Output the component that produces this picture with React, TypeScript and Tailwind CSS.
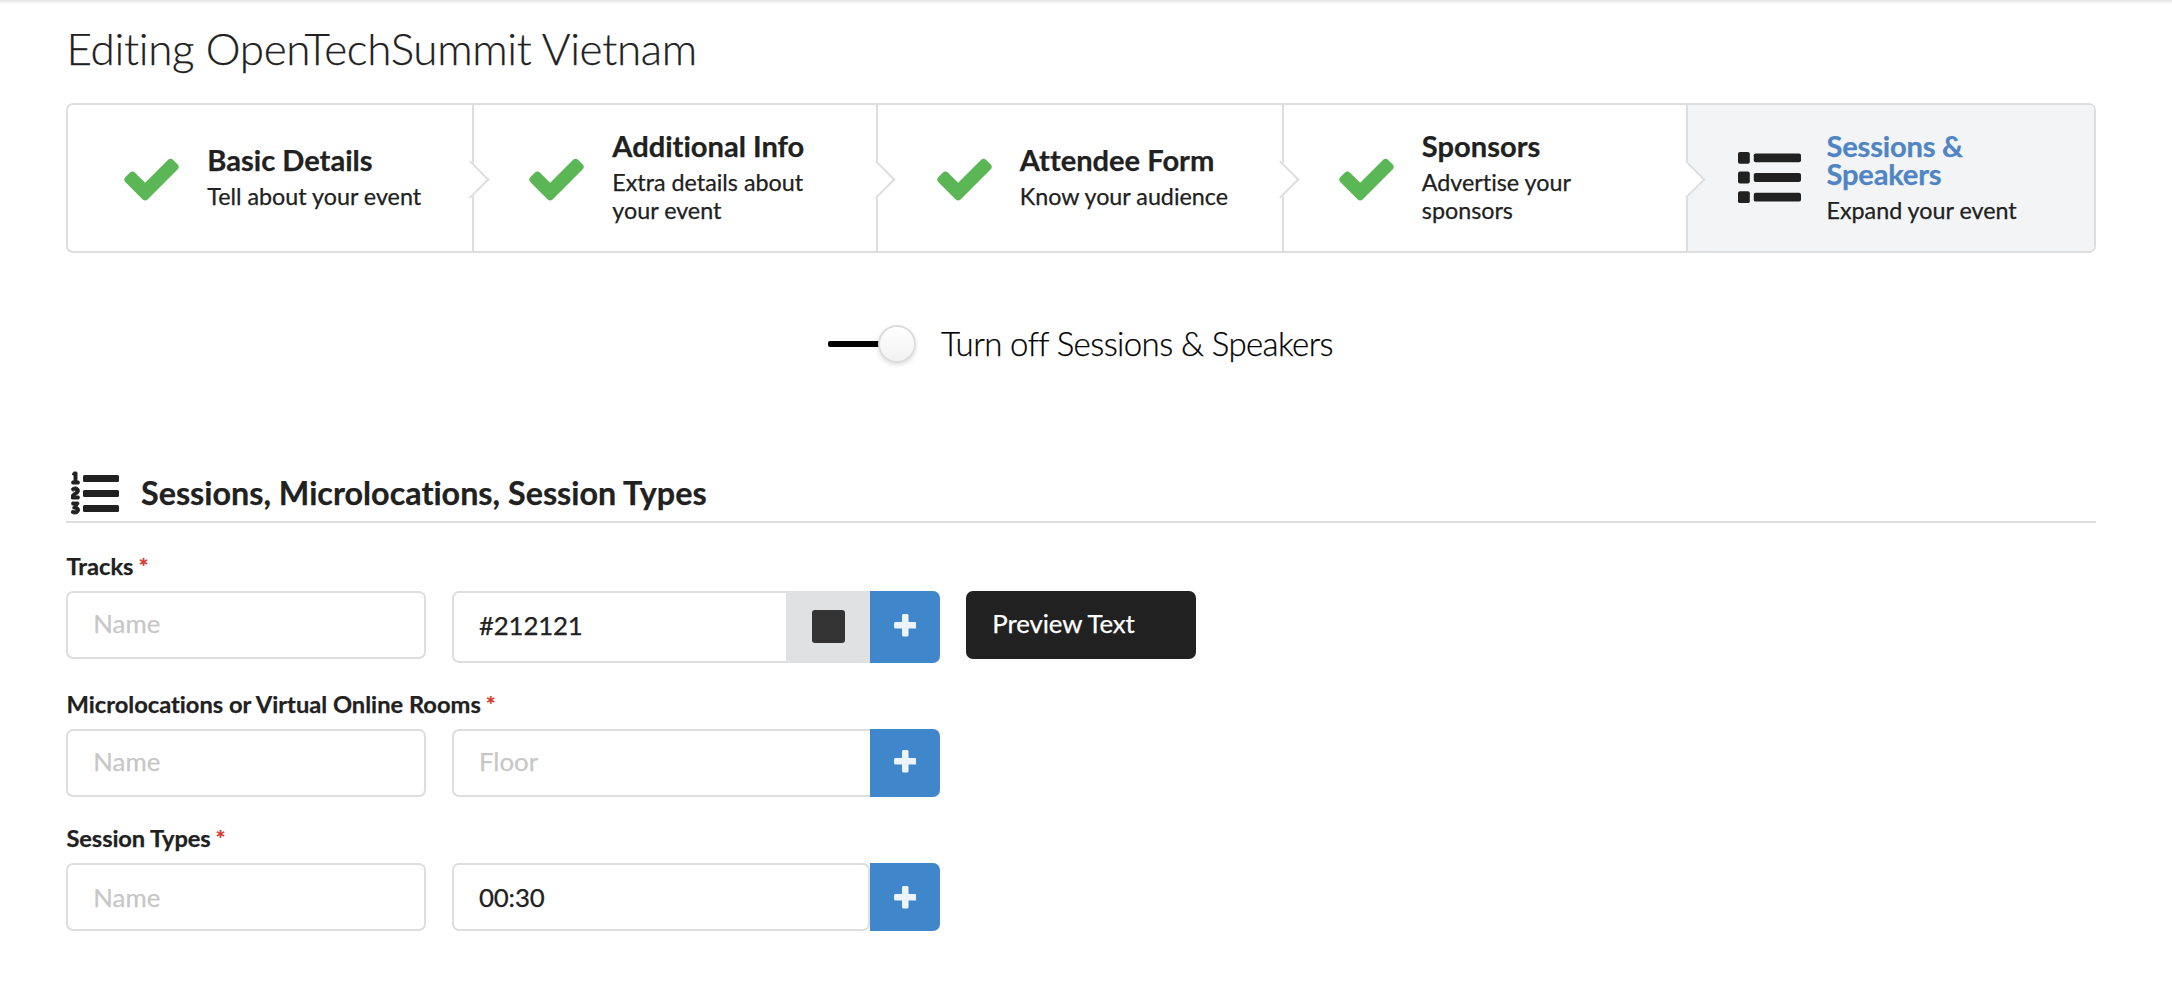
import type { ReactNode } from "react";
import { FaListOl } from "react-icons/fa";

function CheckIcon() {
  return (
    <svg viewBox="0 0 1792 1792" className="size-[63px] shrink-0 fill-[#5bb756]">
      <path d="M1671 566q0 40-28 68l-724 724-136 136q-28 28-68 28t-68-28l-136-136-362-362q-28-28-28-68t28-68l136-136q28-28 68-28t68 28l294 295 656-657q28-28 68-28t68 28l136 136q28 28 28 68z" />
    </svg>
  );
}

function ListIcon() {
  return (
    <svg viewBox="0 0 512 512" className="size-[63px] shrink-0 fill-[#212121]">
      {[96, 256, 416].map((y) => (
        <g key={y}>
          <rect x="0" y={y - 48} width="96" height="96" rx="16" />
          <rect x="128" y={y - 36} width="384" height="72" rx="16" />
        </g>
      ))}
    </svg>
  );
}

function OrderedListIcon() {
  return (
    <div className="flex h-12 w-12 shrink-0 justify-between text-[#212121]">
      <div className="h-12 w-[10px] overflow-hidden">
        <FaListOl className="size-12 max-w-none stroke-current stroke-[10]" />
      </div>
      <div className="flex flex-col gap-2 pt-[6px]">
        <span className="h-[7px] w-9 rounded-[1.5px] bg-[#212121]" />
        <span className="h-[7px] w-9 rounded-[1.5px] bg-[#212121]" />
        <span className="h-[7px] w-9 rounded-[1.5px] bg-[#212121]" />
      </div>
    </div>
  );
}

function PlusButton({ className }: { className: string }) {
  return (
    <button className={`flex w-[70px] shrink-0 items-center justify-center self-stretch rounded-r-[7px] bg-[#4086cb] ${className}`}>
      <svg viewBox="0 0 45 45" className="size-[22.5px] fill-[#ecf3fb]">
        <rect x="0" y="16" width="45" height="13" rx="3" />
        <rect x="16" y="0" width="13" height="45" rx="3" />
      </svg>
    </button>
  );
}

type StepProps = {
  title: ReactNode;
  text: ReactNode;
  className: string;
  arrow?: string;
  active?: boolean;
};

function Step({ title, text, className, arrow, active }: StepProps) {
  return (
    <div className={`relative flex h-full items-center ${className}`}>
      {active ? (
        <div className="-mt-[2px] mr-[25.5px]">
          <ListIcon />
        </div>
      ) : (
        <div className="mt-px mr-[24.3px]">
          <CheckIcon />
        </div>
      )}
      <div className="whitespace-nowrap">
        <div className={`text-[29.1px] leading-[28px] font-bold ${active ? "tracking-[-0.2px] text-[#4f85c4]" : ""}`}>{title}</div>
        <div className="mt-2 text-[23.3px] leading-[28px]">{text}</div>
      </div>
      {arrow && (
        <span
          className={`absolute top-[60.5px] z-10 size-[27px] -rotate-45 border-r-2 border-b-2 border-[#dedede] bg-white ${arrow}`}
        />
      )}
    </div>
  );
}

function Label({ children, className }: { children: ReactNode; className: string }) {
  return (
    <div className={`pl-[0.5px] text-[23.7px] leading-[28px] font-bold ${className}`}>
      {children}
      <span className="ml-[5px] text-[#d33a2f]">*</span>
    </div>
  );
}

function NameField({ className }: { className: string }) {
  return (
    <div className={`h-[68px] w-[360px] rounded-[7px] border-2 border-[#dedede] pl-[25.3px] text-[#c7c7c7] ${className}`}>
      Name
    </div>
  );
}

export default function App() {
  return (
    <div
      className="flex h-[1008px] w-[2172px] flex-col overflow-hidden bg-white text-[25.8px] text-[#212121] [-webkit-text-stroke:0.25px]"
      style={{ fontFamily: "Lato, sans-serif", fontVariantLigatures: "none" }}
    >
      <div className="h-1 shrink-0 bg-linear-to-b from-[#e2e2e2] to-white" />
      <main className="flex flex-col px-[66px] pt-[18px] pr-[76px]">
        <h1 className="pl-[0.5px] text-[44px] leading-[52px] font-light tracking-[-0.33px]">Editing OpenTechSummit Vietnam</h1>

        <div className="mt-[29px] flex h-[150px] rounded-[7px] border-2 border-[#dedede]">
          <Step className="w-[406px] border-r-2 border-[#dedede] pl-[52px]" arrow="-right-[11.5px]" title="Basic Details" text="Tell about your event" />
          <Step
            className="w-[404px] border-r-2 border-[#dedede] pl-[51px]"
            arrow="-right-[13.5px]"
            title="Additional Info"
            text={<>Extra details about<br />your event</>}
          />
          <Step className="w-[406px] border-r-2 border-[#dedede] pl-[54.5px]" arrow="-right-[11.5px]" title="Attendee Form" text="Know your audience" />
          <Step
            className="w-[404px] border-r-2 border-[#dedede] pl-[50.5px]"
            arrow="-right-[13.5px]"
            title="Sponsors"
            text={<>Advertise your<br />sponsors</>}
          />
          <Step
            className="w-[406px] rounded-r-[5px] bg-[#f3f4f5] pl-[50px]"
            active
            title={<>Sessions &amp;<br />Speakers</>}
            text="Expand your event"
          />
        </div>

        <div className="mt-[70px] flex h-10 items-center pl-[762px]">
          <div className="mt-[2px] flex w-[88px] items-center">
            <span className="h-[6px] w-[54px] rounded-l-[2px] bg-black" />
            <span className="-ml-1 size-[38px] rounded-full border-2 border-[#dcdcdc] bg-linear-to-b from-white to-[#f2f2f2] shadow-[0_2px_4px_rgba(34,36,38,0.15)]" />
          </div>
          <span className="-mt-px ml-[25px] text-[33px] leading-10 font-light tracking-[-0.6px] text-black">Turn off Sessions &amp; Speakers</span>
        </div>

        <div className="mt-[105px] flex h-[55px] border-b-2 border-[#dedede] pl-[5px]">
          <div className="mt-[0.5px]">
            <OrderedListIcon />
          </div>
          <h2 className="mt-[5px] ml-[22px] text-[32.3px] leading-10 font-bold">Sessions, Microlocations, Session Types</h2>
        </div>

        <Label className="mt-[29px]">Tracks</Label>
        <div className="mt-[11px] flex h-[72px] items-start gap-[26px]">
          <NameField className="leading-[61px]" />
          <div className="flex h-[72px] w-[488px]">
            <div className="flex-1 rounded-l-[7px] border-2 border-r-0 border-[#dedede] pl-[25px] leading-[64px] tracking-[-0.15px]">#212121</div>
            <div className="flex w-[84px] items-center justify-center bg-[#e0e1e2]">
              <span className="mb-px size-[33px] rounded-[3px] bg-[#333333]" />
            </div>
            <PlusButton className="pb-[3px]" />
          </div>
          <div className="h-[68px] w-[230px] rounded-[7px] bg-[#212121] pl-[26.3px] leading-[65px] tracking-[-0.1px] text-white">Preview Text</div>
        </div>

        <Label className="mt-[27px]">Microlocations or Virtual Online Rooms</Label>
        <div className="mt-[11px] flex gap-[26px]">
          <NameField className="leading-[61px]" />
          <div className="flex h-[68px] w-[488px]">
            <div className="flex-1 rounded-l-[7px] border-2 border-r-0 border-[#dedede] pl-[25px] leading-[61px] text-[#c7c7c7]">Floor</div>
            <PlusButton className="pb-[3px]" />
          </div>
        </div>

        <Label className="mt-[27px] tracking-[-0.12px]">Session Types</Label>
        <div className="mt-[11px] flex gap-[26px]">
          <NameField className="leading-[65px]" />
          <div className="flex h-[68px] w-[488px]">
            <div className="flex-1 rounded-[7px] border-2 border-[#dedede] pl-[25px] leading-[65px] tracking-[-0.15px]">00:30</div>
            <PlusButton className="pt-px" />
          </div>
        </div>
      </main>
    </div>
  );
}
